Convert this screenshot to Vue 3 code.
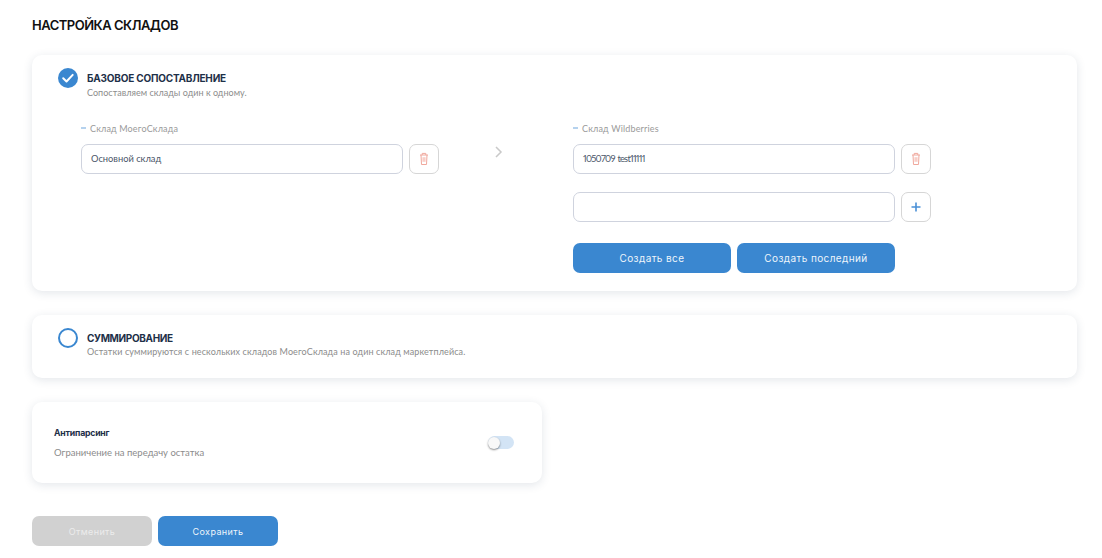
<script setup>
const trash = 'M5 5h8M7.2 5V3.4h3.6V5M6 5l.5 9.5h5L12 5'
</script>

<template>
  <div class="page">
    <h1 class="title">НАСТРОЙКА СКЛАДОВ</h1>

    <section class="card card-base">
      <div class="head">
        <svg class="radio" width="20" height="20" viewBox="0 0 20 20">
          <circle cx="10" cy="10" r="10" fill="#3a87d0" />
          <path d="M5.2 10.2l3.3 3.3 6.2-6.6" fill="none" stroke="#fff" stroke-width="2" stroke-linecap="round" stroke-linejoin="round" />
        </svg>
        <div class="head-text">
          <div class="head-title">БАЗОВОЕ СОПОСТАВЛЕНИЕ</div>
          <div class="head-sub">Сопоставляем склады один к одному.</div>
        </div>
      </div>

      <div class="columns">
        <div class="col">
          <div class="label"><i class="dash"></i>Склад МоегоСклада</div>
          <div class="row">
            <div class="field">Основной склад</div>
            <button class="icon-btn">
              <svg width="18" height="18" viewBox="0 0 18 18" fill="none">
                <path :d="trash" stroke="#f0a89d" stroke-width="1" stroke-linejoin="round" />
                <rect x="7.4" y="7.2" width="3.2" height="4.6" fill="#f8cfc9" />
              </svg>
            </button>
          </div>
        </div>

        <div class="arrow">
          <svg width="10" height="14" viewBox="0 0 10 14" fill="none">
            <path d="M2 2l5 5-5 5" stroke="#c9c9c9" stroke-width="1.5" />
          </svg>
        </div>

        <div class="col">
          <div class="label"><i class="dash"></i>Склад Wildberries</div>
          <div class="row">
            <div class="field field-num">1050709 test11111</div>
            <button class="icon-btn">
              <svg width="18" height="18" viewBox="0 0 18 18" fill="none">
                <path :d="trash" stroke="#f0a89d" stroke-width="1" stroke-linejoin="round" />
                <rect x="7.4" y="7.2" width="3.2" height="4.6" fill="#f8cfc9" />
              </svg>
            </button>
          </div>
          <div class="row row-next">
            <div class="field"></div>
            <button class="icon-btn">
              <svg width="12" height="12" viewBox="0 0 12 12" fill="none">
                <path d="M6 1.5v9M1.5 6h9" stroke="#4a90d6" stroke-width="1.6" />
              </svg>
            </button>
          </div>
          <div class="create">
            <button class="btn primary">Создать все</button>
            <button class="btn primary">Создать последний</button>
          </div>
        </div>
      </div>
    </section>

    <section class="card card-sum">
      <div class="head">
        <svg class="radio" width="20" height="20" viewBox="0 0 20 20">
          <circle cx="10" cy="10" r="9" fill="none" stroke="#3a87d0" stroke-width="2" />
        </svg>
        <div class="head-text">
          <div class="head-title head-title-sum">СУММИРОВАНИЕ</div>
          <div class="head-sub head-sub-wide">Остатки суммируются с нескольких складов МоегоСклада на один склад маркетплейса.</div>
        </div>
      </div>
    </section>

    <section class="card card-anti">
      <div class="anti-text">
        <div class="anti-title">Антипарсинг</div>
        <div class="anti-sub">Ограничение на передачу остатка</div>
      </div>
      <div class="switch"><span class="knob"></span></div>
    </section>

    <div class="actions">
      <button class="btn big disabled">Отменить</button>
      <button class="btn big primary">Сохранить</button>
    </div>
  </div>
</template>

<style>
html, body { background: #fff; }
</style>

<style scoped>
.page {
  width: 1102px;
  height: 558px;
  box-sizing: border-box;
  padding: 17px 25px 0 32px;
  font-family: "Lato", "Noto Sans", sans-serif;
  overflow: hidden;
}
.title {
  margin: 0;
  font-size: 13px;
  line-height: 17px;
  font-weight: 600;
  color: #111;
  font-family: "Inter", sans-serif;
  letter-spacing: -0.5px;
}
.card {
  background: #fff;
  border-radius: 10px;
  box-shadow: 0 2px 10px rgba(40, 60, 90, 0.13);
}
.card-base {
  margin-top: 21px;
  height: 236px;
  box-sizing: border-box;
  padding: 13px 0 0 26px;
}
.card-sum {
  margin-top: 24px;
  height: 63px;
  box-sizing: border-box;
  padding: 13px 0 0 26px;
}
.head {
  display: flex;
  align-items: flex-start;
}
.radio { flex: none; }
.head-text { margin-left: 9px; padding-top: 4px; }
.head-title {
  font-family: "Inter", sans-serif;
  font-size: 10px;
  line-height: 12px;
  font-weight: 700;
  color: #1e3048;
  letter-spacing: -0.2px;
}
.head-title-sum { letter-spacing: -0.35px; }
.head-sub {
  margin-top: 3px;
  font-size: 9px;
  line-height: 11px;
  color: #8c8c8c;
  letter-spacing: 0.03px;
}
.head-sub-wide { margin-top: 2px; letter-spacing: 0.11px; }
.columns {
  display: flex;
  margin: 24px 0 0 23px;
}
.col { width: 358px; flex: none; }
.arrow {
  width: 134px;
  flex: none;
  box-sizing: border-box;
  padding: 23px 0 0 55px;
}
.arrow svg { display: block; }
.label {
  display: flex;
  align-items: center;
  height: 12px;
  font-size: 9px;
  letter-spacing: 0.16px;
  color: #9a9a9a;
}
.dash {
  flex: none;
  width: 5px;
  height: 2px;
  margin-right: 4px;
  background: #b5d2ee;
}
.row {
  display: flex;
  gap: 6px;
  margin-top: 10px;
}
.row-next { margin-top: 18px; }
.field {
  width: 322px;
  height: 30px;
  box-sizing: border-box;
  border: 1px solid #cfd3de;
  border-radius: 7px;
  padding: 0 9px;
  font-size: 9.3px;
  line-height: 28px;
  color: #4a5568;
}
.field-num {
  font-variant-numeric: proportional-nums;
  letter-spacing: -0.75px;
  word-spacing: 1px;
}
.icon-btn {
  width: 30px;
  height: 30px;
  flex: none;
  padding: 0;
  display: flex;
  align-items: center;
  justify-content: center;
  background: #fff;
  border: 1px solid #d6d6d6;
  border-radius: 7px;
}
.create {
  display: flex;
  gap: 6px;
  margin-top: 21px;
}
.btn {
  height: 30px;
  border: 0;
  border-radius: 7px;
  padding: 0;
  width: 158px;
  font-family: "Inter", sans-serif;
  font-size: 10px;
  letter-spacing: 0.4px;
  color: #fff;
}
.big { width: 120px; font-size: 9px; }
.primary { background: #3a87d0; color: #eef5fb; }
.disabled { background: #d1d1d1; color: #ececec; }
.card-anti {
  margin-top: 24px;
  width: 510px;
  height: 81px;
  box-sizing: border-box;
  padding: 0 28px 0 22px;
  display: flex;
  align-items: center;
  justify-content: space-between;
}
.anti-text { padding-top: 1px; }
.anti-title {
  font-family: "Inter", sans-serif;
  font-size: 8.7px;
  line-height: 11px;
  font-weight: 700;
  color: #1e3048;
  letter-spacing: -0.2px;
}
.anti-sub {
  margin-top: 8px;
  font-size: 9.5px;
  line-height: 12px;
  color: #8c8c8c;
}
.switch {
  position: relative;
  width: 26px;
  height: 13px;
  border-radius: 7px;
  background: #d3e4f5;
}
.knob {
  position: absolute;
  left: 0;
  top: 0.5px;
  width: 12px;
  height: 12px;
  border-radius: 50%;
  background: #f8f8f8;
  box-shadow: 0 1px 2px rgba(0, 0, 0, 0.45);
}
.actions {
  display: flex;
  gap: 6px;
  margin-top: 33px;
}
</style>
